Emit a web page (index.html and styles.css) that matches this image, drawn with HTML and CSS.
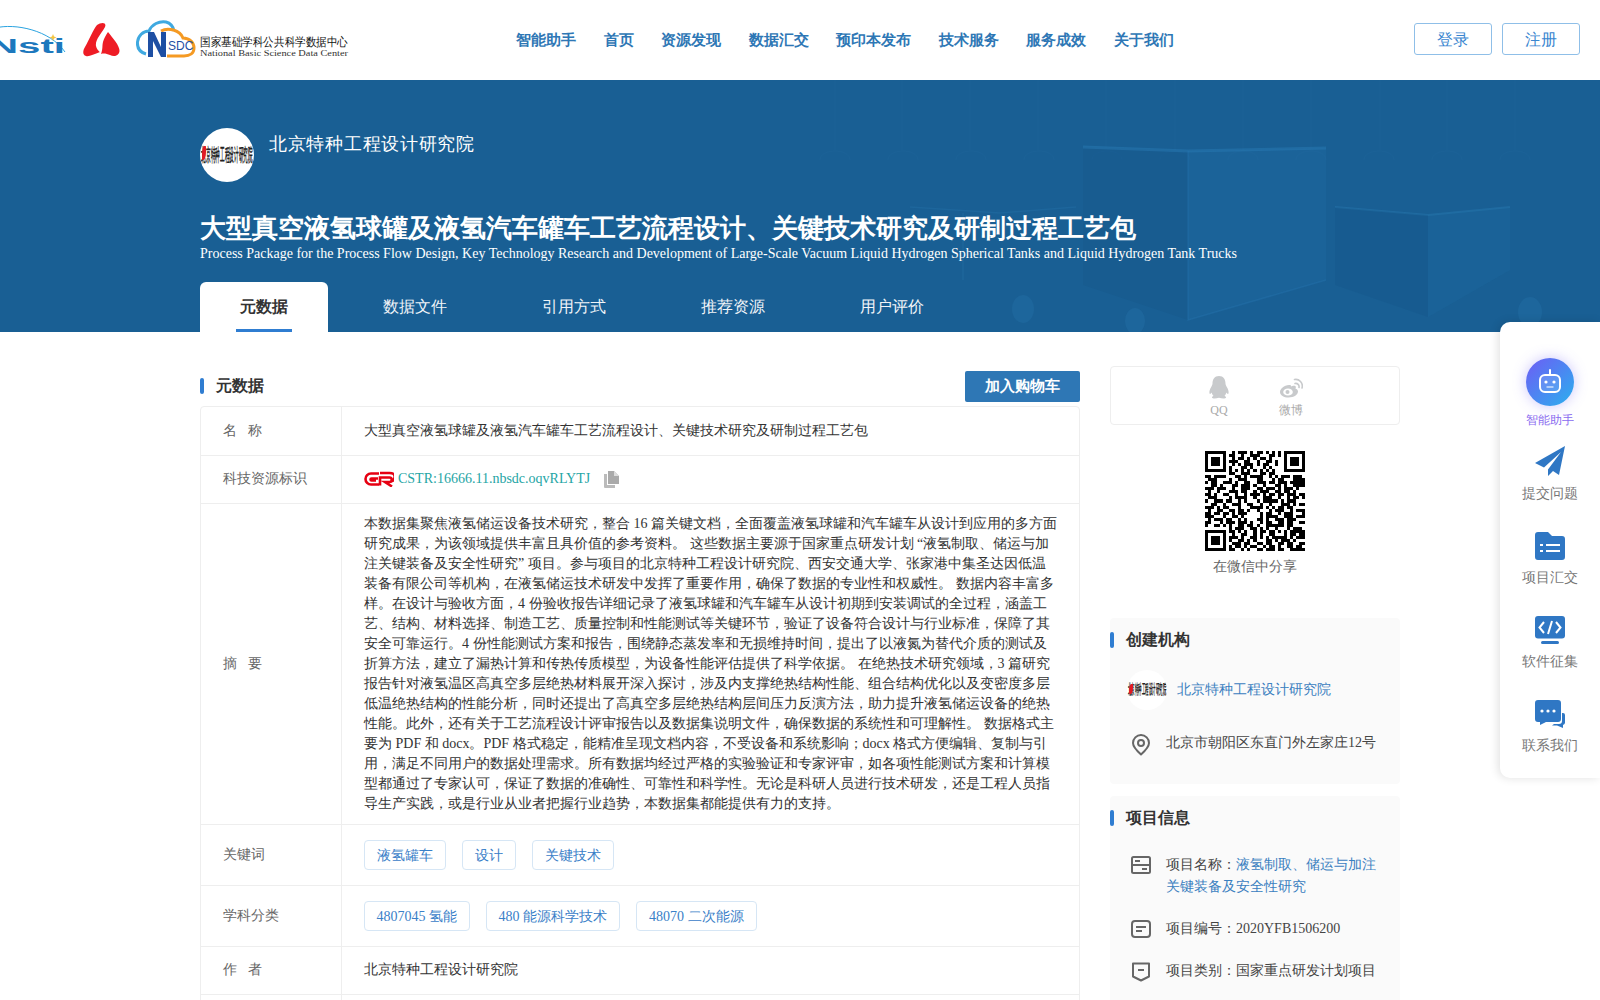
FILE: index.html
```html
<!DOCTYPE html>
<html>
<head>
<meta charset="utf-8">
<title>大型真空液氢球罐及液氢汽车罐车工艺流程设计、关键技术研究及研制过程工艺包</title>
<link rel="stylesheet" href="styles.css">
</head>
<body>
<div class="page">
  <header class="topbar">
    <div class="logos">
      <svg class="logo-nsti" viewBox="0 0 66 40" width="66" height="40">
        <path d="M-5 8C15 3 50 10 65 32" fill="none" stroke="#2aa3e0" stroke-width="1"/>
        <path d="M53 14l1 2.500 2.500 1-2.500 1-1 2.500-1-2.500-2.500-1 2.500-1z" fill="#f5c542"/>
        <text x="-11" y="33" class="logo-nsti-text" textLength="76" lengthAdjust="spacingAndGlyphs">Nsti</text>
      </svg>
      <svg class="logo-red" viewBox="0 0 38 36" width="38" height="36">
        <path d="M14 3C18 0 24 0 22 5C18 12 12 18 13 24C14 28 17 30 17 30C11 32 6 35 3 34C-1 33 0 28 2 25C6 18 10 8 14 3Z" fill="#ee1c25"/>
        <path d="M25 10C29 15 37 24 36.500 29C36 34 31 35 27 33C24 32 21 31 18 32C20 27 19 24 20 20C21 16 23 13 25 10Z" fill="#ee1c25"/>
      </svg>
      <svg class="logo-nsdc" viewBox="0 0 214 40" width="214" height="40">
        <path d="M10 34C3 32 1 28 1.500 22C2 16 7 11 13 11C16 4 23 1 30 2C34 3 37 6 38 11" fill="none" stroke="#3fa9e0" stroke-width="3"/>
        <path d="M25 11C32 7 44 10 47 18C54 18 58 23 58 28C58 33 54 36 48 36H31" fill="none" stroke="#f59a23" stroke-width="3"/>
        <path d="M12 37V12H18L25 27V12H30V37H25L17 21V37Z" fill="#1e4fa3"/>
        <text x="32" y="30" class="logo-sdc">SDC</text>
        <text x="64" y="26" class="logo-cn" textLength="148" lengthAdjust="spacingAndGlyphs">国家基础学科公共科学数据中心</text>
        <text x="64" y="36" class="logo-en" textLength="148" lengthAdjust="spacingAndGlyphs">National Basic Science Data Center</text>
      </svg>
    </div>
    <nav class="nav">
      <a class="nav-item">智能助手</a>
      <a class="nav-item">首页</a>
      <a class="nav-item">资源发现</a>
      <a class="nav-item">数据汇交</a>
      <a class="nav-item">预印本发布</a>
      <a class="nav-item">技术服务</a>
      <a class="nav-item">服务成效</a>
      <a class="nav-item">关于我们</a>
    </nav>
    <div class="auth">
      <a class="auth-btn">登录</a>
      <a class="auth-btn">注册</a>
    </div>
  </header>

  <section class="banner">
    <svg class="banner-art" viewBox="0 0 1600 252" width="1600" height="252">
      <g fill="none" stroke="#2f77a8" stroke-opacity=".13">
        <path d="M820 80C820 68 850 68 850 80M888 80C888 68 918 68 918 80M956 80C956 68 986 68 986 80M1024 80C1024 68 1054 68 1054 80M1092 80C1092 68 1122 68 1122 80M1160 80C1160 68 1190 68 1190 80M1228 80C1228 68 1258 68 1258 80M1296 80C1296 68 1326 68 1326 80M1364 80C1364 68 1394 68 1394 80M1432 80C1432 68 1462 68 1462 80M1500 80C1500 68 1530 68 1530 80"/>
        <path d="M835 0V70M902 0V70M970 0V70M1038 0V70M1106 0V70M1175 0V70M1243 0V70M1311 0V70M1380 0V70M1447 0V70M1515 0V70"/>
      </g>
      <g>
        <path d="M1083 67L1188 71V240L1083 205Z" fill="#124f80" fill-opacity=".2"/>
        <path d="M1188 71L1326 68V200L1188 240Z" fill="#2372ab" fill-opacity=".22"/>
        <path d="M1083 67L1188 71L1326 68" fill="none" stroke="#2a7cb5" stroke-width="3" stroke-opacity=".45"/>
        <path d="M1188 71V240L1326 200" fill="none" stroke="#2a7cb5" stroke-width="1.500" stroke-opacity=".3"/>
        <path d="M910 127L1000 133L1076 127M963 133V200" fill="none" stroke="#2a7cb5" stroke-width="1.500" stroke-opacity=".25"/>
        <path d="M1335 127L1428 135L1510 127" fill="none" stroke="#2a7cb5" stroke-width="2" stroke-opacity=".4"/>
        <path d="M1335 127L1428 135V237L1335 205Z" fill="#124f80" fill-opacity=".18"/>
        <path d="M1428 135L1510 127V190L1428 237Z" fill="#2372ab" fill-opacity=".18"/>
        <ellipse cx="1023" cy="229" rx="11" ry="14" fill="#2a7cb5" fill-opacity=".25"/>
        <ellipse cx="1135" cy="241" rx="10" ry="13" fill="#2a7cb5" fill-opacity=".25"/>
        <ellipse cx="1530" cy="232" rx="12" ry="15" fill="#2a7cb5" fill-opacity=".25"/>
      </g>
    </svg>
    <div class="banner-inner">
      <div class="org">
        <div class="avatar avatar-lg"><span class="avatar-text">北京特种工程设计研究院</span><i class="avatar-flame"></i></div>
        <div class="org-name">北京特种工程设计研究院</div>
      </div>
      <h1 class="title">大型真空液氢球罐及液氢汽车罐车工艺流程设计、关键技术研究及研制过程工艺包</h1>
      <p class="title-en">Process Package for the Process Flow Design, Key Technology Research and Development of Large-Scale Vacuum Liquid Hydrogen Spherical Tanks and Liquid Hydrogen Tank Trucks</p>
      <div class="tabs">
        <a class="tab tab-active"><span class="tab-label">元数据</span></a>
        <a class="tab">数据文件</a>
        <a class="tab">引用方式</a>
        <a class="tab">推荐资源</a>
        <a class="tab">用户评价</a>
      </div>
    </div>
  </section>

  <main class="content">
    <div class="col-main">
      <div class="section-head">
        <h2 class="section-title section-title-main">元数据</h2>
        <a class="cart-btn">加入购物车</a>
      </div>
      <div class="meta-table">
        <div class="meta-row">
          <div class="meta-label meta-label-spaced"><span>名</span><span>称</span></div>
          <div class="meta-value">大型真空液氢球罐及液氢汽车罐车工艺流程设计、关键技术研究及研制过程工艺包</div>
        </div>
        <div class="meta-row">
          <div class="meta-label meta-label-up">科技资源标识</div>
          <div class="meta-value meta-value-short cstr">
            <svg class="cstr-logo" viewBox="0 0 30 16" width="30" height="16">
              <path d="M15 2.500H7A5.500 5.500 0 0 0 7 13.500H15M14 7.500H7.500A1 1 0 0 0 7.500 9.500H12" fill="none" stroke="#e60012" stroke-width="2.600"/>
              <path d="M16 14.500V6.500H25.500A2.200 2.200 0 0 1 25.500 11H21L28 15.500M16 2H25.500C33 2 31 9 28 10" fill="none" stroke="#e60012" stroke-width="2.600"/>
            </svg>
            <a class="cstr-link">CSTR:16666.11.nbsdc.oqvRLYTJ</a>
            <svg class="copy-icon" viewBox="0 0 15 17" width="15" height="17">
              <path d="M4 0H10L15 5V13H4Z" fill="#aaa"/>
              <path d="M10 0V5H15Z" fill="#ddd"/>
              <path d="M0 3H3V14H11V17H1A1 1 0 0 1 0 16Z" fill="#bbb"/>
            </svg>
          </div>
        </div>
        <div class="meta-row">
          <div class="meta-label meta-label-spaced"><span>摘</span><span>要</span></div>
          <div class="meta-value meta-abstract">本数据集聚焦液氢储运设备技术研究，整合 16 篇关键文档，全面覆盖液氢球罐和汽车罐车从设计到应用的多方面研究成果，为该领域提供丰富且具价值的参考资料。 这些数据主要源于国家重点研发计划 “液氢制取、储运与加注关键装备及安全性研究” 项目。参与项目的北京特种工程设计研究院、西安交通大学、张家港中集圣达因低温装备有限公司等机构，在液氢储运技术研发中发挥了重要作用，确保了数据的专业性和权威性。 数据内容丰富多样。在设计与验收方面，4 份验收报告详细记录了液氢球罐和汽车罐车从设计初期到安装调试的全过程，涵盖工艺、结构、材料选择、制造工艺、质量控制和性能测试等关键环节，验证了设备符合设计与行业标准，保障了其安全可靠运行。4 份性能测试方案和报告，围绕静态蒸发率和无损维持时间，提出了以液氮为替代介质的测试及折算方法，建立了漏热计算和传热传质模型，为设备性能评估提供了科学依据。 在绝热技术研究领域，3 篇研究报告针对液氢温区高真空多层绝热材料展开深入探讨，涉及内支撑绝热结构性能、组合结构优化以及变密度多层低温绝热结构的性能分析，同时还提出了高真空多层绝热结构层间压力反演方法，助力提升液氢储运设备的绝热性能。此外，还有关于工艺流程设计评审报告以及数据集说明文件，确保数据的系统性和可理解性。 数据格式主要为 PDF 和 docx。PDF 格式稳定，能精准呈现文档内容，不受设备和系统影响；docx 格式方便编辑、复制与引用，满足不同用户的数据处理需求。所有数据均经过严格的实验验证和专家评审，如各项性能测试方案和计算模型都通过了专家认可，保证了数据的准确性、可靠性和科学性。无论是科研人员进行技术研发，还是工程人员指导生产实践，或是行业从业者把握行业趋势，本数据集都能提供有力的支持。</div>
        </div>
        <div class="meta-row">
          <div class="meta-label">关键词</div>
          <div class="meta-value meta-tags">
            <a class="tag">液氢罐车</a><a class="tag">设计</a><a class="tag">关键技术</a>
          </div>
        </div>
        <div class="meta-row">
          <div class="meta-label">学科分类</div>
          <div class="meta-value meta-tags">
            <a class="tag tag-code">4807045 氢能</a><a class="tag">480 能源科学技术</a><a class="tag">48070 二次能源</a>
          </div>
        </div>
        <div class="meta-row">
          <div class="meta-label meta-label-spaced meta-label-up"><span>作</span><span>者</span></div>
          <div class="meta-value meta-value-short">北京特种工程设计研究院</div>
        </div>
        <div class="meta-row meta-row-blank">
          <div class="meta-label"></div>
          <div class="meta-value meta-value-short"></div>
        </div>
      </div>
    </div>

    <aside class="col-side">
      <div class="share-box">
        <div class="share-item">
          <svg viewBox="0 0 20 24" width="20" height="24">
            <path d="M10 1C14.500 1 16.500 4.500 16.500 8.500C16.500 9.500 17 10.500 17.800 12C19 14 20 16.500 19.500 18.500C19 19.500 18 18.500 17.300 17.500C17 19 16.300 20 15.500 20.800C16.500 21.300 17.300 22 17 22.800C16.500 23.800 13 23.800 10 22.800C7 23.800 3.500 23.800 3 22.800C2.700 22 3.500 21.300 4.500 20.800C3.700 20 3 19 2.700 17.500C2 18.500 1 19.500 .500 18.500C0 16.500 1 14 2.200 12C3 10.500 3.500 9.500 3.500 8.500C3.500 4.500 5.500 1 10 1Z" fill="#c8cacc"/>
          </svg>
          <span>QQ</span>
        </div>
        <div class="share-item">
          <svg viewBox="0 0 24 24" width="24" height="24">
            <path d="M10 10C5 10 1 14 1 17C1 20.500 5 22.500 9.500 22.500C15 22.500 19 19.500 19 16.500C19 14.800 17.700 14 16.500 13.700C17 12.500 17 11.500 16.300 11C15 10.200 13 11 12 11.500C12.300 10.500 12 10 10 10Z" fill="#c8cacc"/>
            <ellipse cx="9" cy="17" rx="4.800" ry="3.600" fill="#fff"/>
            <circle cx="8.500" cy="17" r="2" fill="#c8cacc"/>
            <path d="M16 8.500C18.500 8 20.500 10 20 12.500M15.500 4.500C20 3.500 24.500 8 23 13" fill="none" stroke="#c8cacc" stroke-width="1.600" stroke-linecap="round"/>
          </svg>
          <span>微博</span>
        </div>
      </div>
      <div class="qr-wrap">
        <svg class="qr" viewBox="0 0 33 33" width="100" height="100" shape-rendering="crispEdges">
          <path fill="none" stroke="#000" d="M0 .5h7m2 0h1m1 0h3m1 0h1m1 0h2m1 0h1m1 0h1m1 0h1M26 .5h7M0 1.500h1m5 0h1m1 0h2m2 0h1m2 0h3m3 0h2m1 0h1M26 1.500h1m5 0h1M0 2.500h1m1 0h3m1 0h1m2 0h1m1 0h2m1 0h1m1 0h1m1 0h2m1 0h1M26 2.500h1m1 0h3m1 0h1M0 3.500h1m1 0h3m1 0h1m1 0h3m2 0h2m2 0h1m2 0h2m1 0h1M26 3.500h1m1 0h3m1 0h1M0 4.500h1m1 0h3m1 0h1m2 0h1m1 0h1m1 0h3m1 0h1m1 0h2m2 0h1M26 4.500h1m1 0h3m1 0h1M0 5.500h1m5 0h1m1 0h1m3 0h2m1 0h1m3 0h1m1 0h1M26 5.500h1m5 0h1M0 6.500h7m1 0h1m1 0h1m1 0h1m1 0h1m1 0h1m1 0h1m1 0h1m1 0h1M26 6.500h7M8 7.500h2m2 0h3m3 0h2m1 0h2M0 8.500h2m1 0h4m3 0h2m1 0h1m1 0h4m2 0h1m1 0h1m1 0h3m1 0h3M1 9.500h3m4 0h1m2 0h3m3 0h2m3 0h1m1 0h2m3 0h1m1 0h1M29 9.500h4M0 10.500h1m1 0h2m2 0h3m1 0h1m2 0h2m2 0h3m1 0h2m1 0h3m1 0h2M30 10.500h3M2 11.500h2m1 0h1m3 0h2m1 0h3m1 0h1m2 0h1m3 0h2m1 0h1m2 0h2M31 11.500h2M0 12.500h3m1 0h3m2 0h1m2 0h3m2 0h2m1 0h3m1 0h1m1 0h3m1 0h1M1 13.500h1m2 0h1m3 0h3m1 0h2m2 0h1m1 0h3m2 0h2m1 0h2m1 0h1M0 14.500h2m1 0h1m2 0h2m2 0h1m2 0h1m1 0h3m1 0h1m1 0h2m1 0h2m1 0h3M31 14.500h2M1 15.500h3m4 0h1m1 0h4m2 0h1m2 0h3m2 0h1m2 0h1m1 0h1M30 15.500h1m1 0h1M0 16.500h1m2 0h3m1 0h2m2 0h1m1 0h1m3 0h1m1 0h5m1 0h1m1 0h3M2 17.500h2m2 0h1m2 0h3m2 0h2m2 0h1m2 0h1m3 0h3m1 0h1M31 17.500h2M0 18.500h3m1 0h1m1 0h2m3 0h1m3 0h4m1 0h1m1 0h1m1 0h2m1 0h2M1 19.500h1m2 0h2m2 0h2m1 0h2m1 0h1m2 0h1m3 0h1m1 0h3m2 0h1M30 19.500h3M0 20.500h2m1 0h2m1 0h2m1 0h1m1 0h3m4 0h1m1 0h2m2 0h1m1 0h3M32 20.500h1M0 21.500h3m3 0h1m2 0h2m1 0h1m5 0h1m1 0h4m2 0h3M30 21.500h3M1 22.500h1m1 0h3m1 0h2m2 0h1m1 0h1m3 0h2m1 0h1m2 0h3m1 0h3M0 23.500h2m3 0h1m1 0h3m1 0h3m1 0h1m2 0h1m1 0h2m2 0h2m1 0h2M31 23.500h2M0 24.500h1m2 0h2m1 0h1m1 0h1m2 0h2m1 0h2m1 0h1m2 0h6m1 0h2M8 25.500h1m1 0h3m2 0h2m1 0h1m1 0h1m2 0h1m3 0h1m1 0h1M29 25.500h3M0 26.500h7m1 0h2m1 0h1m1 0h1m2 0h1m1 0h2m1 0h2m1 0h1m1 0h1m1 0h1M29 26.500h4M0 27.500h1m5 0h1m2 0h1m2 0h2m2 0h1m1 0h1m2 0h2m3 0h1m1 0h2M31 27.500h2M0 28.500h1m1 0h3m1 0h1m1 0h3m1 0h1m2 0h2m1 0h1m1 0h1m1 0h5m1 0h1M30 28.500h3M0 29.500h1m1 0h3m1 0h1m1 0h1m2 0h2m1 0h1m1 0h1m3 0h2m1 0h1m1 0h3m1 0h1M0 30.500h1m1 0h3m1 0h1m2 0h3m1 0h2m2 0h2m1 0h2m2 0h2m1 0h2M31 30.500h2M0 31.500h1m5 0h1m1 0h1m1 0h2m1 0h1m1 0h2m2 0h1m1 0h2m1 0h1m2 0h2M30 31.500h2M0 32.500h7m1 0h2m2 0h1m1 0h1m2 0h2m1 0h3m1 0h2m2 0h3M31 32.500h2"/>
        </svg>
        <div class="qr-caption">在微信中分享</div>
      </div>

      <section class="side-card">
        <h3 class="section-title side-title">创建机构</h3>
        <div class="org-row">
          <div class="avatar avatar-sm"><span class="avatar-text avatar-text-sm">北京特种工程设计研究院</span><i class="avatar-flame"></i></div>
          <a class="side-link">北京特种工程设计研究院</a>
        </div>
        <div class="info-row info-row-addr">
          <svg class="info-icon" viewBox="0 0 20 22" width="20" height="22">
            <path d="M10 20.500C5 16 2 12.500 2 9A8 8 0 0 1 18 9C18 12.500 15 16 10 20.500Z" fill="none" stroke="#666" stroke-width="2" stroke-linejoin="round"/>
            <circle cx="10" cy="9" r="3" fill="none" stroke="#666" stroke-width="2"/>
          </svg>
          <span class="info-text">北京市朝阳区东直门外左家庄12号</span>
        </div>
      </section>

      <section class="side-card">
        <h3 class="section-title side-title side-title-wide">项目信息</h3>
        <div class="info-row">
          <svg class="info-icon" viewBox="0 0 20 18" width="20" height="18">
            <rect x="1" y="1" width="18" height="16" rx="1.500" fill="none" stroke="#666" stroke-width="2"/>
            <path d="M1 9H19M4 5H9M11 13H16" fill="none" stroke="#666" stroke-width="2"/>
          </svg>
          <span class="info-text">项目名称：<a class="side-link">液氢制取、储运与加注关键装备及安全性研究</a></span>
        </div>
        <div class="info-row">
          <svg class="info-icon" viewBox="0 0 20 18" width="20" height="18">
            <rect x="1" y="1" width="18" height="16" rx="3" fill="none" stroke="#666" stroke-width="2"/>
            <path d="M5 7H15M5 11H11" fill="none" stroke="#666" stroke-width="2"/>
          </svg>
          <span class="info-text">项目编号：2020YFB1506200</span>
        </div>
        <div class="info-row">
          <svg class="info-icon" viewBox="0 0 20 20" width="20" height="20">
            <path d="M2 1.500H18V14.500L10 18.500L2 14.500Z" fill="none" stroke="#666" stroke-width="2" stroke-linejoin="round"/>
            <path d="M7 8H13" fill="none" stroke="#666" stroke-width="2"/>
          </svg>
          <span class="info-text">项目类别：国家重点研发计划项目</span>
        </div>
      </section>
    </aside>
  </main>

  <aside class="float-panel">
    <a class="float-item float-ai">
      <span class="ai-circle">
        <svg viewBox="0 0 26 26" width="26" height="26">
          <path d="M13 1V5" stroke="#fff" stroke-width="2" stroke-linecap="round"/>
          <rect x="3" y="6" width="20" height="17" rx="5" fill="#fff" fill-opacity=".12" stroke="#fff" stroke-width="2"/>
          <circle cx="9" cy="13" r="1.600" fill="#fff"/><circle cx="17" cy="13" r="1.600" fill="#fff"/>
          <path d="M10 18H16" stroke="#fff" stroke-opacity=".7" stroke-width="1.400" stroke-linecap="round"/>
        </svg>
      </span>
      <span class="float-label float-label-ai">智能助手</span>
    </a>
    <a class="float-item float-item-first">
      <svg viewBox="0 0 30 30" width="30" height="30">
        <path d="M30 0L0 17L9 21.500L26 6L13 23.500V30L18 25L24 29Z" fill="#2f77c4"/>
      </svg>
      <span class="float-label">提交问题</span>
    </a>
    <a class="float-item">
      <svg viewBox="0 0 30 28" width="30" height="28">
        <path d="M3 0H13L17 4H27A3 3 0 0 1 30 7V25A3 3 0 0 1 27 28H3A3 3 0 0 1 0 25V3A3 3 0 0 1 3 0Z" fill="#2f77c4"/>
        <path d="M5 13H8M11 13H25M5 19H8M11 19H25" stroke="#fff" stroke-width="2"/>
      </svg>
      <span class="float-label">项目汇交</span>
    </a>
    <a class="float-item">
      <svg viewBox="0 0 30 28" width="30" height="28">
        <rect width="30" height="22.500" rx="3" fill="#2f77c4"/>
        <rect x="6" y="25" width="18" height="3" rx="1.500" fill="#2f77c4"/>
        <path d="M9 6L4.500 11.500L9 17M21 6L25.500 11.500L21 17M17 5L13 18" fill="none" stroke="#fff" stroke-width="2"/>
      </svg>
      <span class="float-label">软件征集</span>
    </a>
    <a class="float-item">
      <svg viewBox="0 0 30 28" width="30" height="28">
        <path d="M27 13H28A2 2 0 0 1 30 15V23A3 3 0 0 1 28 25V28L22 25.500H17L19 24H24A3 3 0 0 0 27 21Z" fill="#2f77c4"/>
        <path d="M3 0H23A3 3 0 0 1 26 3V19A3 3 0 0 1 23 22H11L5 25V22H3A3 3 0 0 1 0 19V3A3 3 0 0 1 3 0Z" fill="#2f77c4"/>
        <circle cx="7" cy="11" r="1.600" fill="#fff"/><circle cx="13" cy="11" r="1.600" fill="#fff"/><circle cx="19" cy="11" r="1.600" fill="#fff"/>
      </svg>
      <span class="float-label">联系我们</span>
    </a>
  </aside>
</div>
</body>
</html>
```
FILE: styles.css
```css
* { box-sizing: border-box; }
html, body { margin: 0; padding: 0; }
body {
  font-family: "Liberation Serif", serif;
  font-size: 14px;
  color: #333;
  background: #fff;
}
a { color: inherit; text-decoration: none; }
h1, h2, h3, p { margin: 0; }

.page { position: relative; width: 1600px; height: 1000px; overflow: hidden; }

.topbar { height: 80px; display: flex; align-items: center; position: relative; }
.logos { width: 516px; display: flex; align-items: center; }
.logo-nsti-text { font: bold 20px "Liberation Sans", sans-serif; fill: #1d78bd; }
.logo-red { margin-left: 17px; }
.logo-nsdc { margin-left: 15px; }
.logo-sdc { font: 12px "Liberation Sans", sans-serif; fill: #1e4fa3; }
.logo-cn { font: 11.500px "Liberation Serif", serif; fill: #111; }
.logo-en { font: 8.500px "Liberation Serif", serif; fill: #333; }

.nav { display: flex; gap: 27.500px; flex: 1; }
.nav-item { font-size: 15px; font-weight: 700; color: #2e77b5; white-space: nowrap; }

.auth { display: flex; gap: 10px; margin-right: 20px; margin-bottom: 2px; }
.auth-btn {
  width: 78px; height: 32px;
  padding-top: 3px;
  border: 1px solid #8fbfe8; border-radius: 3px;
  color: #3a86d0; font-size: 16px;
  display: flex; align-items: center; justify-content: center;
}

.banner { position: relative; height: 252px; background: #195f94; overflow: hidden; }
.banner-art { position: absolute; left: 0; top: 0; }
.banner-inner { position: relative; width: 1200px; margin: 0 auto; padding-top: 48px; color: #fff; }
.org { display: flex; height: 54px; }
.avatar { position: relative; border-radius: 50%; background: #fff; overflow: hidden; flex: none; display: flex; align-items: center; justify-content: center; }
.avatar-lg { width: 54px; height: 54px; }
.avatar-sm { width: 40px; height: 40px; }
.avatar-text { display: block; white-space: nowrap; color: #222; font-weight: 700; font-size: 18px; transform: scaleX(.26); transform-origin: center; flex: none; margin: 0 -80px; }
.avatar-text-sm { font-size: 14px; transform: scaleX(.25); }
.avatar-flame { position: absolute; left: 2px; top: 34%; width: 4px; height: 26%; background: #e01b24; border-radius: 60% 10%; }
.org-name { margin-left: 15px; font-size: 18px; letter-spacing: .72px; line-height: 32px; color: #fff; }
.title { margin-top: 30px; font-size: 26px; line-height: 34px; font-weight: 700; color: #fff; white-space: nowrap; }
.title-en { font-size: 14px; line-height: 16px; color: #fff; white-space: nowrap; }

.tabs { position: absolute; left: 0; top: 202px; height: 50px; display: flex; }
.tab { margin-right: 15px; padding: 0 40px; font-size: 16px; line-height: 50px; color: #f0f4f8; }
.tab-active { margin-right: 15px; background: #fff; color: #333; font-weight: 700; border-radius: 6px 6px 0 0; height: 50px; padding: 0 36px; position: relative; }
.tab-label { display: block; width: 56px; text-align: center; height: 50px; border-bottom: 3px solid #2f7dd1; }

.content { width: 1200px; margin: 0 auto; display: flex; gap: 30px; align-items: flex-start; }
.col-main { width: 880px; padding-top: 39px; }
.col-side { width: 290px; padding-top: 34px; }

.section-head { display: flex; justify-content: space-between; align-items: center; height: 31px; margin-bottom: 4px; }
.section-title { position: relative; padding-left: 16px; font-size: 16px; line-height: 20px; font-weight: 700; color: #333; }
.section-title-main { margin-bottom: 2px; }
.section-title::before { content: ""; position: absolute; left: 0; top: 2px; width: 4px; height: 16px; border-radius: 2px; background: #2f7dd1; }
.cart-btn { width: 115px; height: 31px; background: #2e77b5; color: #fff; font-size: 15px; font-weight: 700; border-radius: 2px; display: flex; align-items: center; justify-content: center; }

.meta-table { border: 1px solid #eee; border-radius: 4px; }
.meta-row { display: flex; border-bottom: 1px solid #eee; }
.meta-row-blank { height: 60px; }
.meta-label { width: 141px; flex: none; padding-left: 22px; border-right: 1px solid #eee; color: #666; display: flex; align-items: center; }
.meta-label-spaced { gap: 11px; }
.meta-label-up { padding-bottom: 2px; }
.meta-value { flex: 1; padding: 14px 22px; line-height: 20px; color: #333; }
.meta-value-short { padding: 13px 22px 14px; }
.meta-abstract { padding: 10px 22px; }
.cstr { display: flex; align-items: center; }
.cstr-logo { margin-right: 4px; }
.cstr-link { color: #25a5a5; }
.copy-icon { margin-left: 14px; }
.meta-tags { display: flex; gap: 16px; padding: 15px 22px; }
.tag { height: 30px; padding: 0 12px; border: 1px solid #d6e6f5; border-radius: 4px; color: #3a80c8; line-height: 30px; }
.tag-code { padding: 0 11.500px; }

.share-box { height: 59px; border: 1px solid #eee; border-radius: 4px; display: flex; justify-content: center; gap: 50px; align-items: flex-start; padding-top: 8px; }
.share-item { width: 22px; display: flex; flex-direction: column; align-items: center; font-size: 12px; line-height: 16px; color: #aaa; gap: 3px; white-space: nowrap; }
.qr-wrap { display: flex; flex-direction: column; align-items: center; padding-top: 26px; height: 193px; }
.qr { display: block; }
.qr-caption { margin-top: 6px; line-height: 20px; color: #666; }

.side-card { background: #fafafa; border-radius: 4px; padding: 12px 0 1px; margin-bottom: 12px; }
.side-title { margin-bottom: 20px; }
.side-title-wide { margin-bottom: 26px; }
.org-row { display: flex; align-items: center; margin-left: 17px; gap: 10px; color: #3a80c0; }
.side-link { color: #3a80c0; }
.info-row { display: flex; align-items: flex-start; padding: 0 20px 0 21px; margin-bottom: 20px; }
.info-row-addr { margin-top: 22px; margin-bottom: 27px; }
.info-icon { flex: none; margin-right: 15px; margin-top: 2px; }
.info-text { line-height: 22px; color: #444; }

.float-panel {
  position: absolute; left: 1500px; top: 322px; width: 100px; height: 456px;
  background: #fff; border-radius: 10px 0 0 10px;
  box-shadow: -2px 0 10px rgba(0,0,0,.12);
  display: flex; flex-direction: column; align-items: center;
}
.float-item { flex: none; height: 84px; display: flex; flex-direction: column; align-items: center; justify-content: flex-end; gap: 8px; }
.float-item-first { height: 76px; }
.float-ai { height: 106px; padding-top: 36px; gap: 6px; justify-content: flex-start; }
.ai-circle { flex: none; width: 48px; height: 48px; border-radius: 50%; background: linear-gradient(135deg, #6e5cf5, #2ab0ee); box-shadow: 0 0 14px rgba(110,92,245,.35); display: flex; align-items: center; justify-content: center; }
.float-label { font-size: 14px; line-height: 20px; color: #777; }
.float-label-ai { font-size: 12px; line-height: 16px; color: #8a6cf0; }
```
